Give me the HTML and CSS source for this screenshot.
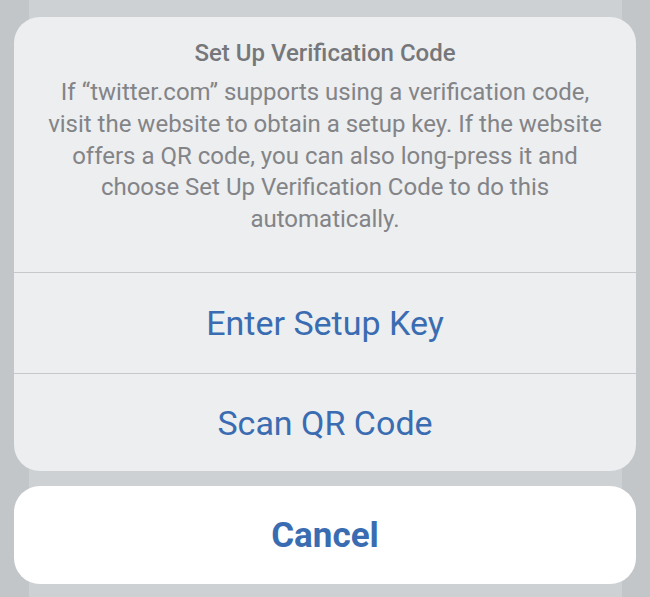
FILE: index.html
```html
<!DOCTYPE html>
<html lang="en">
<head>
    <meta charset="UTF-8">
    <meta name="viewport" content="width=device-width, initial-scale=1.0">
    <title>Set Up Verification Code</title>
    <link rel="stylesheet" href="styles.css">
</head>
<body>
    <div class="sheet-wrap">
        <div class="action-sheet">
            <div class="sheet-header">
                <div class="sheet-title">Set Up Verification Code</div>
                <p class="sheet-message">If “twitter.com” supports using a verification code, visit the website to obtain a setup key. If the website offers a QR code, you can also long-press it and choose Set Up Verification Code to do this automatically.</p>
            </div>
            <button class="sheet-action">Enter Setup Key</button>
            <button class="sheet-action">Scan QR Code</button>
        </div>
        <button class="cancel-btn">Cancel</button>
    </div>
</body>
</html>
```

FILE: styles.css
```css
* {
    margin: 0;
    padding: 0;
    box-sizing: border-box;
}

body {
    font-family: Roboto, 'Noto Sans', sans-serif;
    height: 597px;
    overflow: hidden;
    background: linear-gradient(to right, #c3c6c9 0, #c3c6c9 29px, #ced1d4 29px, #ced1d4 622px, #c3c6c9 622px);
}

.sheet-wrap {
    width: 622px;
    margin-left: 14px;
    padding-top: 17px;
}

.action-sheet {
    background: #eceef0;
    border-radius: 26px;
    overflow: hidden;
}

.sheet-header {
    height: 256px;
    padding: 21px 24px 0;
    text-align: center;
    border-bottom: 1px solid #c6c8cb;
}

.sheet-title {
    font-size: 24px;
    line-height: 30px;
    font-weight: 500;
    color: #76777a;
    margin-bottom: 9px;
}

.sheet-message {
    font-size: 24px;
    line-height: 31.8px;
    color: #838487;
}

.sheet-action {
    display: block;
    width: 100%;
    height: 100px;
    border: none;
    background: none;
    font-family: inherit;
    font-size: 34px;
    color: #3a6cb2;
}

.sheet-action + .sheet-action {
    height: 98px;
    border-top: 1px solid #c6c8cb;
}

.cancel-btn {
    display: block;
    width: 100%;
    height: 98px;
    margin-top: 15px;
    border: none;
    border-radius: 26px;
    background: #ffffff;
    font-family: inherit;
    font-size: 35px;
    font-weight: 700;
    color: #3a6cb2;
}
```
